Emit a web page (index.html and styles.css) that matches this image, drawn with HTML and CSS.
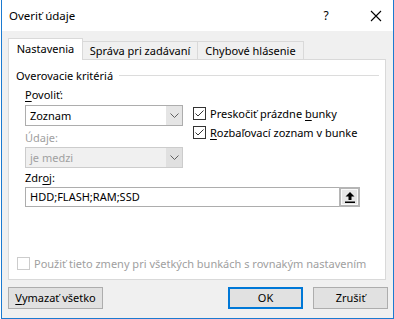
FILE: index.html
```html
<!DOCTYPE html>
<html lang="sk">
<head>
<meta charset="utf-8">
<title>Overiť údaje</title>
<link rel="stylesheet" href="styles.css">
</head>
<body>
<div class="window">
  <div class="titlebar">
    <span class="title">Overiť údaje</span>
    <span class="help">?</span>
    <span class="close">
      <svg width="12" height="12" viewBox="0 0 12 12"><path d="M1 1 L11 11 M11 1 L1 11" stroke="#000" stroke-width="1.1" fill="none"/></svg>
    </span>
  </div>
  <div class="client">
    <div class="tabs">
      <div class="tab active">Nastavenia</div>
      <div class="tab">Správa pri zadávaní</div>
      <div class="tab">Chybové hlásenie</div>
    </div>
    <div class="panel">
      <div class="group-head"><span class="group-title">Overovacie kritériá</span><span class="rule"></span></div>
      <div class="criteria">
        <div class="col-left">
          <div class="label"><u>P</u>ovoliť:</div>
          <div class="combo">
            <span class="combo-value">Zoznam</span>
            <span class="combo-btn"><svg width="9" height="5" viewBox="0 0 9 5"><path d="M0.5 0.5 L4.5 4.5 L8.5 0.5" stroke="#606060" stroke-width="1" fill="none"/></svg></span>
          </div>
          <div class="label disabled">Údaje:</div>
          <div class="combo disabled">
            <span class="combo-value">je medzi</span>
            <span class="combo-btn"><svg width="9" height="5" viewBox="0 0 9 5"><path d="M0.5 0.5 L4.5 4.5 L8.5 0.5" stroke="#606060" stroke-width="1" fill="none"/></svg></span>
          </div>
        </div>
        <div class="col-right">
          <div class="check">
            <span class="box"><svg width="11" height="11" viewBox="0 0 11 11"><path d="M1.5 5.5 L4 8 L9.5 2.5" stroke="#333" stroke-width="1" fill="none"/></svg></span>
            <span>Preskočiť prázdne <u>b</u>unky</span>
          </div>
          <div class="check second">
            <span class="box"><svg width="11" height="11" viewBox="0 0 11 11"><path d="M1.5 5.5 L4 8 L9.5 2.5" stroke="#333" stroke-width="1" fill="none"/></svg></span>
            <span><u>R</u>ozbaľovací zoznam v bunke</span>
          </div>
        </div>
      </div>
      <div class="label source-label">Zdr<u>o</u>j:</div>
      <div class="source">
        <span class="source-text">HDD;FLASH;RAM;SSD</span>
        <span class="ref-btn"><svg width="10" height="11" viewBox="0 0 10 11"><path d="M5 0 L9.5 4.5 L6.5 4.5 L6.5 8 L3.5 8 L3.5 4.5 L0.5 4.5 Z" fill="#000"/><rect x="0" y="9.5" width="10" height="1.5" fill="#000"/></svg></span>
      </div>
      <div class="check apply-all disabled">
        <span class="box"></span>
        <span>Použiť tieto zmeny pri všetkých bunkách s rovnakým nastavením</span>
      </div>
    </div>
    <div class="buttons">
      <button class="btn clear"><u>V</u>ymazať všetko</button>
      <div class="btn-group">
        <button class="btn default">OK</button>
        <button class="btn">Zrušiť</button>
      </div>
    </div>
  </div>
</div>
</body>
</html>
```
FILE: styles.css
```css
* { box-sizing: border-box; }
html, body { margin: 0; padding: 0; background: #ffffff; }
body {
  font-family: "Noto Sans", "Open Sans", sans-serif;
  font-size: 11px;
  color: #000;
}
u { text-decoration: underline; text-underline-offset: 2px; }

.window {
  margin-left: 1px;
  width: 393px;
  height: 319px;
  border: 1px solid #1c7ad0;
  border-top: none;
  display: flex;
  flex-direction: column;
  background: #f0f0f0;
}

.titlebar {
  height: 31px;
  background: #fff;
  display: flex;
  align-items: center;
  padding-left: 7px;
  flex: none;
  font-size: 11.5px;
}
.title { flex: 1; }
.help { width: 14px; margin-right: 36px; text-align: center; font-size: 12px; }
.close { width: 14px; margin-right: 10px; display: flex; align-items: center; justify-content: center; }

.client {
  flex: 1;
  padding: 7px 0 0 6px;
  background: #f0f0f0;
}

.tabs {
  display: flex;
  align-items: flex-end;
  height: 21px;
  position: relative;
  z-index: 1;
}
.tab {
  height: 18px;
  border: 1px solid #d9d9d9;
  border-bottom: none;
  background: #f0f0f0;
  line-height: 17px;
  white-space: nowrap;
  margin-left: -1px;
  text-align: center;
}
.tab.active {
  margin-left: 0;
  height: 22px;
  margin-bottom: -1px;
  background: #fff;
  line-height: 20px;
  width: 75px;
  position: relative;
  z-index: 2;
}
.tab:nth-child(2) { width: 116px; }
.tab:nth-child(3) { width: 107px; }

.panel {
  width: 378px;
  height: 221px;
  border: 1px solid #d9d9d9;
  background: #fff;
  padding: 8px 6px 0 7px;
}

.group-head {
  display: flex;
  align-items: center;
  height: 16px;
  line-height: 16px;
}
.rule {
  flex: 1;
  height: 1px;
  background: #dcdcdc;
  margin-left: 6px;
  margin-top: -1px;
}

.criteria {
  display: flex;
  margin-top: 3px;
  padding-left: 9px;
}
.col-left { width: 158px; }
.col-right { margin-left: 10px; padding-top: 20px; }

.label { height: 16px; line-height: 16px; }
.label.disabled { margin-top: 4px; color: #a0a0a0; }

.combo {
  margin-top: 2px;
  height: 21px;
  border: 1px solid #adadad;
  background: #fff;
  display: flex;
  align-items: stretch;
}
.combo.disabled {
  margin-top: 1px;
  border-color: #cccccc;
  background: #f0f0f0;
  color: #a0a0a0;
}
.combo-value { flex: 1; padding-left: 4px; line-height: 19px; }
.combo-btn {
  width: 16px;
  background: #e5e5e5;
  display: flex;
  align-items: center;
  justify-content: center;
}
.combo.disabled .combo-btn { background: #e0e0e0; }

.check {
  display: flex;
  align-items: center;
  height: 13px;
  line-height: 16px;
  white-space: nowrap;
}
.check.second { margin-top: 6px; }
.box {
  width: 13px;
  height: 13px;
  border: 1px solid #333;
  background: #fff;
  margin-right: 4px;
  display: flex;
  align-items: center;
  justify-content: center;
  flex: none;
}

.source-label { margin-top: 2px; margin-left: 9px; }
.source {
  margin-top: 1px;
  margin-left: 9px;
  width: 335px;
  height: 20px;
  border: 1px solid #adadad;
  display: flex;
  align-items: stretch;
}
.source-text { flex: 1; padding-left: 4px; line-height: 18px; }
.ref-btn {
  width: 21px;
  border: 2px solid #b5b5b5;
  margin: -1px -1px -1px 0;
  height: 20px;
  background: #e6e6e6;
  box-shadow: inset 0 0 0 1px #fafafa;
  display: flex;
  align-items: center;
  justify-content: center;
}

.apply-all {
  margin-top: 50px;
  color: #a0a0a0;
  height: 13px;
}
.apply-all .box { border-color: #cccccc; margin-left: 1px; }

.buttons {
  display: flex;
  justify-content: space-between;
  margin-top: 7px;
  padding-right: 5px;
}
.btn-group { display: flex; gap: 10px; }
.btn {
  font-family: inherit;
  font-size: 11px;
  color: #000;
  height: 22px;
  width: 75px;
  border: 1px solid #adadad;
  background: #e1e1e1;
  padding: 0;
  margin: 0;
  line-height: 18px;
}
.btn.clear { width: 95px; }
.btn.default { border: 2px solid #0078d7; }
```
